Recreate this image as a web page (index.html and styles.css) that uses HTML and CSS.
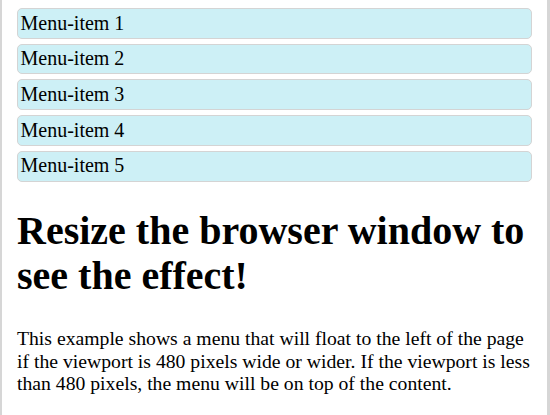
FILE: index.html
```
<!DOCTYPE html>
<html>
<head>
<meta charset="utf-8">
<link rel="stylesheet" href="styles.css">
</head>
<body>
<div class="frame">
  <div class="wrapper">
    <div class="sidebar">
      <ul class="menulist">
        <li class="menuitem">Menu-item 1</li>
        <li class="menuitem">Menu-item 2</li>
        <li class="menuitem">Menu-item 3</li>
        <li class="menuitem">Menu-item 4</li>
        <li class="menuitem">Menu-item 5</li>
      </ul>
    </div>
    <div class="main">
      <h1 class="title">Resize the browser window to see the effect!</h1>
      <p class="text">This example shows a menu that will float to the left of the page if the viewport is 480 pixels wide or wider. If the viewport is less than 480 pixels, the menu will be on top of the content.</p>
    </div>
  </div>
</div>
</body>
</html>
```
FILE: styles.css
```
html, body {
  margin: 0;
  padding: 0;
  background: #ffffff;
}
body {
  font-family: "Liberation Serif", "Times New Roman", serif;
  font-size: 20px;
  color: #000;
  width: 550px;
  height: 415px;
  overflow: hidden;
}
.frame {
  box-sizing: border-box;
  height: 415px;
  border-left: 2px solid #d6d6d6;
  border-right: 3px solid #d6d6d6;
  padding: 3px 10px 0 10px;
}
.wrapper {
  overflow: hidden;
}
.menulist {
  margin: 0;
  padding: 0;
}
.menuitem {
  background: #cdf0f6;
  border: 1px solid #d4d4d4;
  border-radius: 5px;
  list-style-type: none;
  margin: 5px;
  padding: 2.5px;
  line-height: 23.7px;
}
.main {
  margin-left: 5px;
}
.title {
  font-size: 40px;
  font-weight: bold;
  line-height: 45px;
  margin: 26.8px 0 29px 0;
}
.text {
  font-size: 19.7px;
  margin: 20px 0;
  line-height: 22.4px;
}
```
